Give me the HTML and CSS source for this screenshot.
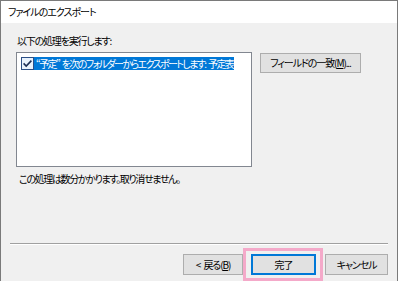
FILE: index.html
```html
<!DOCTYPE html>
<html lang="ja">
<head>
<meta charset="utf-8">
<link rel="stylesheet" href="styles.css">
</head>
<body>
<div class="window">
  <div class="titlebar">ファイルのエクスポート</div>
  <div class="content">
    <div class="label">以下の処理を実行します:</div>
    <div class="row">
      <div class="listbox">
        <div class="item">
          <span class="check"><svg width="13" height="13" viewBox="0 0 13 13"><rect x="0.5" y="0.5" width="12" height="12" fill="#e8f2fc" stroke="#2b4f86"/><path d="M2.6 6.4 L5.2 9 L10.4 3.6" fill="none" stroke="#1d2f55" stroke-width="1.6"/></svg></span>
          <span class="sel">“予定” を次のフォルダーからエクスポートします: 予定表</span>
        </div>
      </div>
      <div class="btn fields">フィールドの一致(<u>M</u>)...</div>
    </div>
    <div class="note">この処理は数分かかります。取り消せません。</div>
  </div>
  <div class="separator"></div>
  <div class="buttons">
    <div class="btn nav back">&lt; 戻る(<u>B</u>)</div>
    <div class="focus-wrap"><div class="btn nav default">完了</div></div>
    <div class="btn nav cancel">キャンセル</div>
  </div>
</div>
</body>
</html>
```
FILE: styles.css
```css
html, body {
  margin: 0;
  padding: 0;
  background: #ffffff;
}
body {
  width: 400px;
  height: 281px;
  overflow: hidden;
  font-family: "Noto Sans CJK JP", "Noto Sans", sans-serif;
  font-size: 10px;
  letter-spacing: -1.1px;
  word-spacing: 2px;
  font-feature-settings: "palt";
  color: #000;
}
.window {
  width: 396px;
  height: 280px;
  border: 1px solid #7a7a7a;
  border-bottom: none;
  background: #f0f0f0;
  display: flex;
  flex-direction: column;
}
.titlebar {
  height: 22px;
  line-height: 22px;
  background: #ffffff;
  padding-left: 7px;
  letter-spacing: -1px;
}
.content {
  padding: 11px 0 0 15px;
  height: 206px;
  box-sizing: border-box;
}
.label {
  line-height: 14px;
  height: 14px;
  padding-left: 1px;
  letter-spacing: -1.2px;
}
.row {
  display: flex;
  align-items: flex-start;
  margin-top: 4px;
  gap: 8px;
}
.listbox {
  width: 234px;
  height: 113px;
  background: #fff;
  border: 1px solid #828790;
}
.item {
  display: flex;
  align-items: center;
  padding: 3px 0 0 4px;
  height: 14px;
}
.check {
  width: 13px;
  height: 13px;
  display: block;
}
.check svg { display: block; }
.sel {
  background: #0078d7;
  color: #fff;
  line-height: 13px;
  height: 13px;
  padding: 0 1px 0 2px;
  white-space: pre;
  letter-spacing: -1.6px;
  word-spacing: 2px;
}
.btn {
  background: #e1e1e1;
  border: 1px solid #adadad;
  box-sizing: border-box;
  text-align: center;
  white-space: nowrap;
}
.fields {
  width: 101px;
  height: 20px;
  line-height: 18px;
  margin-top: 1px;
}
.note {
  margin-top: 5px;
  padding-left: 3px;
  line-height: 14px;
  letter-spacing: -1.35px;
}
.separator {
  margin: 31px 9px 0 9px;
  height: 1px;
  background: #a0a0a0;
  border-bottom: 1px solid #ffffff;
}
.buttons {
  display: flex;
  justify-content: flex-end;
  align-items: center;
  padding: 3px 9px 0 0;
}
.nav {
  width: 61px;
  height: 21px;
  line-height: 19px;
}
.back {
  width: 60px;
}
.cancel {
  width: 63px;
}
.focus-wrap {
  border: 3px solid #f4a9c9;
  padding: 3px 4px 3px 5px;
  margin: 0 2px 0 0;
}
.default {
  width: 65px;
  border: 2px solid #0078d7;
  line-height: 17px;
}
```
